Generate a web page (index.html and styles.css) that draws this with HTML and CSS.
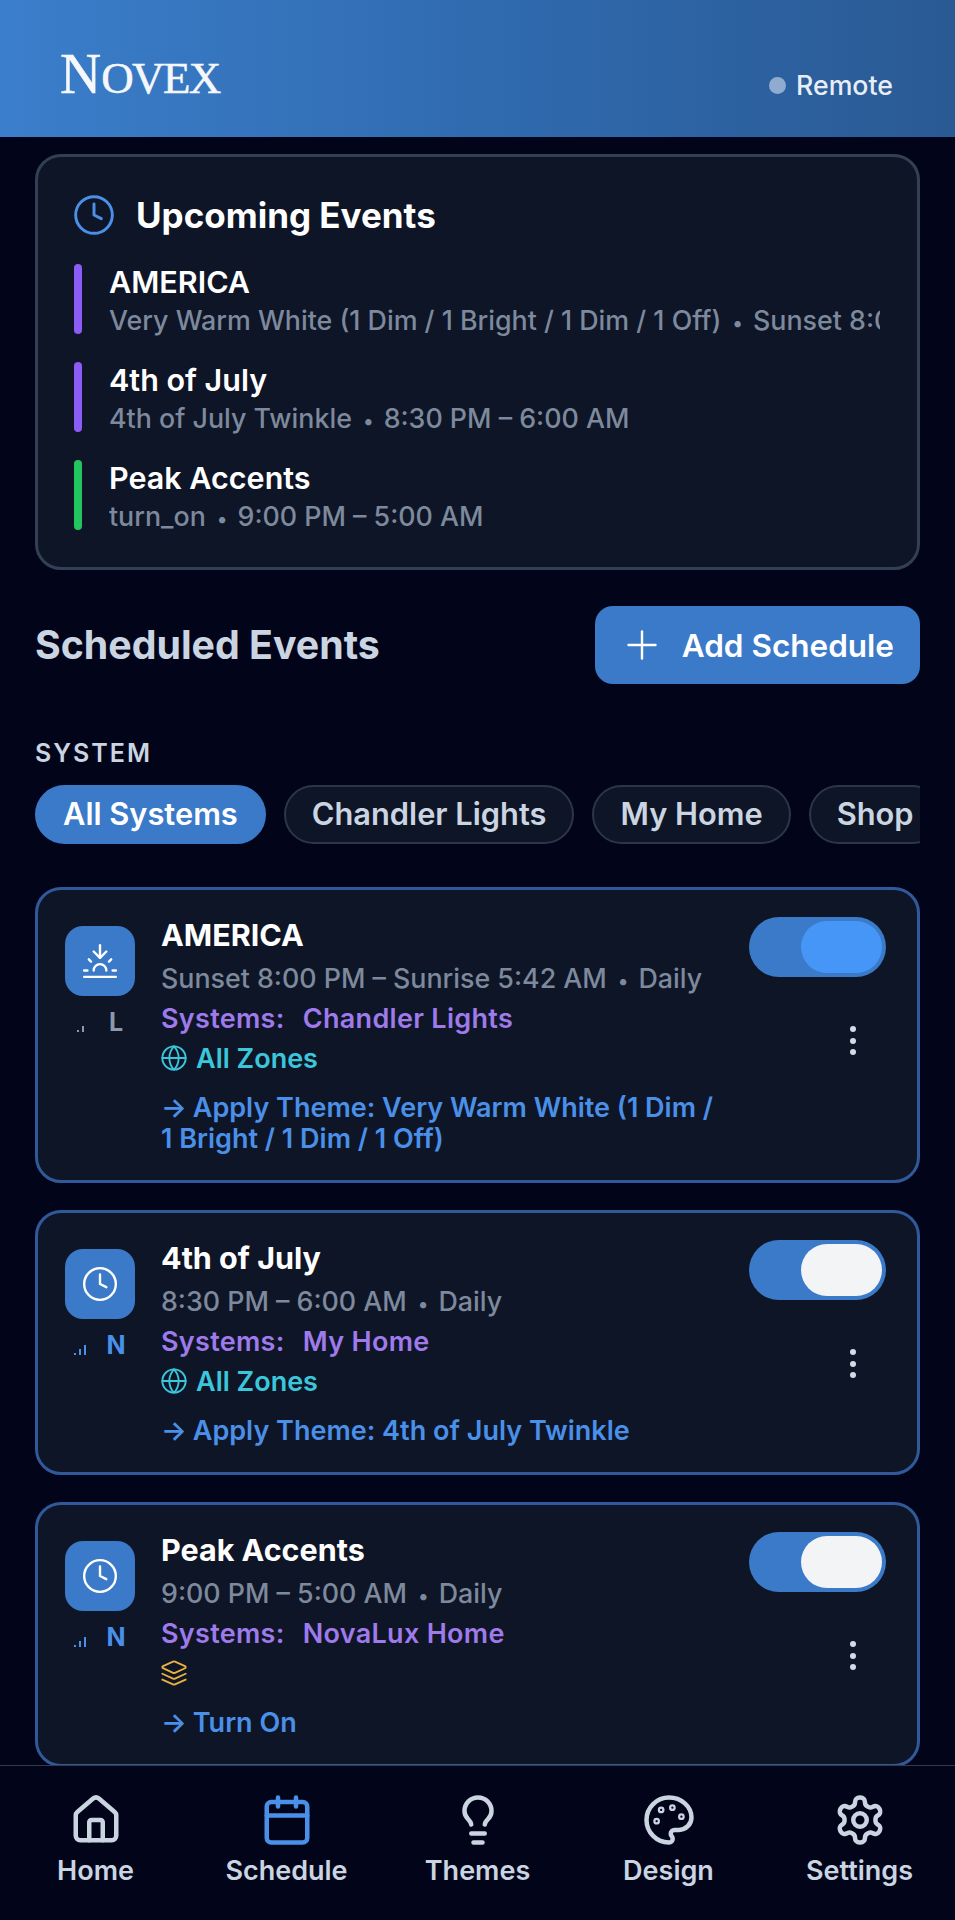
FILE: index.html
```html
<!DOCTYPE html>
<html lang="en">
<head>
  <meta charset="UTF-8" />
  <meta name="viewport" content="width=device-width, initial-scale=1.0"/>
  <title>Novex | Schedule</title>
  <link rel="stylesheet" href="styles.css">
</head>
<body>
  <svg class="sprites" xmlns="http://www.w3.org/2000/svg">
    <symbol id="i-clock" viewBox="0 0 24 24"><circle cx="12" cy="12" r="10"/><path d="M12 6v6l4 2"/></symbol>
    <symbol id="i-sunset" viewBox="0 0 24 24"><path d="M12 10V2"/><path d="m4.93 10.93 1.41 1.41"/><path d="M2 18h2"/><path d="M20 18h2"/><path d="m19.07 10.93-1.41 1.41"/><path d="M22 22H2"/><path d="m16 6-4 4-4-4"/><path d="M16 18a4 4 0 0 0-8 0"/></symbol>
    <symbol id="i-globe" viewBox="0 0 24 24"><circle cx="12" cy="12" r="10"/><path d="M12 2a14.5 14.5 0 0 0 0 20 14.5 14.5 0 0 0 0-20"/><path d="M2 12h20"/></symbol>
    <symbol id="i-layers" viewBox="0 0 24 24"><path d="m12.83 2.18a2 2 0 0 0-1.66 0L2.6 6.08a1 1 0 0 0 0 1.83l8.58 3.91a2 2 0 0 0 1.66 0l8.58-3.9a1 1 0 0 0 0-1.83Z"/><path d="m22 17.65-9.17 4.16a2 2 0 0 1-1.66 0L2 17.65"/><path d="m22 12.65-9.17 4.16a2 2 0 0 1-1.66 0L2 12.65"/></symbol>
  </svg>

  <header class="topbar">
    <div class="logo">N<span class="logo-small">OVEX</span></div>
    <div class="status"><span class="status-dot"></span>Remote</div>
  </header>

  <main class="content">
    <!-- Upcoming -->
    <section class="upcoming">
      <h2 class="upcoming-title">
        <svg class="icon upcoming-clock"><use href="#i-clock"/></svg>
        Upcoming Events
      </h2>
      <div class="upcoming-row">
        <span class="bar bar-purple"></span>
        <div class="upcoming-text">
          <div class="upcoming-name">AMERICA</div>
          <div class="upcoming-sub">Very Warm White (1 Dim / 1 Bright / 1 Dim / 1 Off)<span class="sep">•</span>Sunset 8:00 PM – Sunrise 5:42 AM</div>
        </div>
      </div>
      <div class="upcoming-row">
        <span class="bar bar-purple"></span>
        <div class="upcoming-text">
          <div class="upcoming-name">4th of July</div>
          <div class="upcoming-sub">4th of July Twinkle<span class="sep">•</span>8:30 PM – 6:00 AM</div>
        </div>
      </div>
      <div class="upcoming-row">
        <span class="bar bar-green"></span>
        <div class="upcoming-text">
          <div class="upcoming-name">Peak Accents</div>
          <div class="upcoming-sub">turn_on<span class="sep">•</span>9:00 PM – 5:00 AM</div>
        </div>
      </div>
    </section>

    <div class="section-head">
      <h2 class="section-title">Scheduled Events</h2>
      <button class="add-btn">
        <svg class="icon add-icon" viewBox="0 0 24 24"><path d="M2.5 12h19"/><path d="M12 2.5v19"/></svg>
        Add Schedule
      </button>
    </div>

    <div class="filter-label">SYSTEM</div>
    <div class="chips">
      <span class="chip chip-active">All Systems</span>
      <span class="chip">Chandler Lights</span>
      <span class="chip">My Home</span>
      <span class="chip">Shop</span>
    </div>

    <!-- Events -->
    <article class="event">
      <div class="event-side">
        <div class="event-icon"><svg class="icon"><use href="#i-sunset"/></svg></div>
        <div class="event-signal signal-off">
          <svg class="signal" viewBox="0 0 14 12"><rect x="0" y="10" width="2" height="2"/><rect x="5" y="6" width="2" height="6"/></svg>
          <span>L</span>
        </div>
      </div>
      <div class="event-body">
        <div class="event-name">AMERICA</div>
        <div class="event-meta">Sunset 8:00 PM – Sunrise 5:42 AM<span class="sep">•</span>Daily</div>
        <div class="event-systems">Systems: <span class="system-name">Chandler Lights</span></div>
        <div class="event-zones"><svg class="icon zone-icon"><use href="#i-globe"/></svg>All Zones</div>
        <div class="event-action"><span class="arrow">→</span>Apply Theme: Very Warm White (1 Dim / 1 Bright / 1 Dim / 1 Off)</div>
      </div>
      <div class="event-controls">
        <div class="toggle toggle-busy"><span class="toggle-thumb"></span></div>
        <div class="more"><span></span><span></span><span></span></div>
      </div>
    </article>

    <article class="event">
      <div class="event-side">
        <div class="event-icon"><svg class="icon"><use href="#i-clock"/></svg></div>
        <div class="event-signal">
          <svg class="signal" viewBox="0 0 14 12"><rect x="0" y="10" width="2" height="2"/><rect x="5" y="6" width="2" height="6"/><rect x="10" y="2" width="2" height="10"/></svg>
          <span>N</span>
        </div>
      </div>
      <div class="event-body">
        <div class="event-name">4th of July</div>
        <div class="event-meta">8:30 PM – 6:00 AM<span class="sep">•</span>Daily</div>
        <div class="event-systems">Systems: <span class="system-name">My Home</span></div>
        <div class="event-zones"><svg class="icon zone-icon"><use href="#i-globe"/></svg>All Zones</div>
        <div class="event-action"><span class="arrow">→</span>Apply Theme: 4th of July Twinkle</div>
      </div>
      <div class="event-controls">
        <div class="toggle"><span class="toggle-thumb"></span></div>
        <div class="more"><span></span><span></span><span></span></div>
      </div>
    </article>

    <article class="event">
      <div class="event-side">
        <div class="event-icon"><svg class="icon"><use href="#i-clock"/></svg></div>
        <div class="event-signal">
          <svg class="signal" viewBox="0 0 14 12"><rect x="0" y="10" width="2" height="2"/><rect x="5" y="6" width="2" height="6"/><rect x="10" y="2" width="2" height="10"/></svg>
          <span>N</span>
        </div>
      </div>
      <div class="event-body">
        <div class="event-name">Peak Accents</div>
        <div class="event-meta">9:00 PM – 5:00 AM<span class="sep">•</span>Daily</div>
        <div class="event-systems">Systems: <span class="system-name">NovaLux Home</span></div>
        <div class="event-zones"><svg class="icon zone-icon zone-amber"><use href="#i-layers"/></svg></div>
        <div class="event-action"><span class="arrow">→</span>Turn On</div>
      </div>
      <div class="event-controls">
        <div class="toggle"><span class="toggle-thumb"></span></div>
        <div class="more"><span></span><span></span><span></span></div>
      </div>
    </article>
  </main>

  <nav class="tabbar">
    <a class="tab">
      <svg class="icon tab-icon" viewBox="0 0 24 24"><path d="M15 21v-8a1 1 0 0 0-1-1h-4a1 1 0 0 0-1 1v8"/><path d="M3 10a2 2 0 0 1 .709-1.528l7-5.999a2 2 0 0 1 2.582 0l7 5.999A2 2 0 0 1 21 10v9a2 2 0 0 1-2 2H5a2 2 0 0 1-2-2z"/></svg>
      Home
    </a>
    <a class="tab tab-active">
      <svg class="icon tab-icon" viewBox="0 0 24 24"><path d="M8 2v4"/><path d="M16 2v4"/><rect x="3" y="4" width="18" height="18" rx="2"/><path d="M3 10h18"/></svg>
      Schedule
    </a>
    <a class="tab">
      <svg class="icon tab-icon" viewBox="0 0 24 24"><path d="M15 14c.2-1 .7-1.7 1.5-2.5 1-.9 1.5-2.2 1.5-3.5A6 6 0 0 0 6 8c0 1 .2 2.2 1.5 3.5.7.7 1.3 1.5 1.5 2.5"/><path d="M9 18h6"/><path d="M10 22h4"/></svg>
      Themes
    </a>
    <a class="tab">
      <svg class="icon tab-icon" viewBox="0 0 24 24"><circle cx="13.5" cy="6.5" r=".5"/><circle cx="17.5" cy="10.5" r=".5"/><circle cx="8.5" cy="7.5" r=".5"/><circle cx="6.5" cy="12.5" r=".5"/><path d="M12 2C6.5 2 2 6.5 2 12s4.5 10 10 10c.926 0 1.648-.746 1.648-1.688 0-.437-.18-.835-.437-1.125-.29-.289-.438-.652-.438-1.125a1.64 1.64 0 0 1 1.668-1.668h1.996c3.051 0 5.555-2.503 5.555-5.554C21.965 6.012 17.461 2 12 2z"/></svg>
      Design
    </a>
    <a class="tab">
      <svg class="icon tab-icon" viewBox="0 0 24 24"><path d="M12.22 2h-.44a2 2 0 0 0-2 2v.18a2 2 0 0 1-1 1.73l-.43.25a2 2 0 0 1-2 0l-.15-.08a2 2 0 0 0-2.73.73l-.22.38a2 2 0 0 0 .73 2.73l.15.1a2 2 0 0 1 1 1.72v.51a2 2 0 0 1-1 1.74l-.15.09a2 2 0 0 0-.73 2.73l.22.38a2 2 0 0 0 2.73.73l.15-.08a2 2 0 0 1 2 0l.43.25a2 2 0 0 1 1 1.73V20a2 2 0 0 0 2 2h.44a2 2 0 0 0 2-2v-.18a2 2 0 0 1 1-1.73l.43-.25a2 2 0 0 1 2 0l.15.08a2 2 0 0 0 2.73-.73l.22-.39a2 2 0 0 0-.73-2.73l-.15-.08a2 2 0 0 1-1-1.74v-.5a2 2 0 0 1 1-1.74l.15-.09a2 2 0 0 0 .73-2.73l-.22-.38a2 2 0 0 0-2.73-.73l-.15.08a2 2 0 0 1-2 0l-.43-.25a2 2 0 0 1-1-1.73V4a2 2 0 0 0-2-2z"/><circle cx="12" cy="12" r="3"/></svg>
      Settings
    </a>
  </nav>
</body>
</html>
```

FILE: styles.css
```css
* {
  box-sizing: border-box;
  margin: 0;
  padding: 0;
}
html, body {
  height: 100%;
}
body {
  display: flex;
  flex-direction: column;
  height: 1920px;
  overflow: hidden;
  background: #02051a;
  color: white;
  font-family: 'Inter', 'Liberation Sans', sans-serif;
}
.sprites {
  display: none;
}
.icon {
  fill: none;
  stroke: currentColor;
  stroke-width: 2;
  stroke-linecap: round;
  stroke-linejoin: round;
  flex: none;
}
.sep {
  display: inline-block;
  margin: 0 10px 0 11px;
  font-size: 0.75em;
  line-height: 1;
}

/* Header */
.topbar {
  flex: none;
  height: 137px;
  padding: 0 62px 0 60px;
  display: flex;
  justify-content: space-between;
  background: linear-gradient(90deg, #3b7ecb 0%, #2f69ad 55%, #2a5a94 100%);
}
.logo {
  margin-top: 44px;
  font-family: 'Liberation Serif', serif;
  font-size: 57px;
  line-height: 60px;
  height: 60px;
  color: #f5f7fa;
  -webkit-text-stroke: 0.5px #f5f7fa;
}
.logo-small {
  font-size: 45px;
  letter-spacing: -1.6px;
}
.status {
  margin-top: 69px;
  height: 32px;
  display: flex;
  align-items: center;
  gap: 10px;
  font-size: 26.7px;
  font-weight: 500;
  color: #e8eef6;
}
.status-dot {
  width: 17px;
  height: 17px;
  border-radius: 50%;
  background: #8fabd0;
}

/* Main column */
.content {
  flex: 1;
  min-height: 0;
  overflow: hidden;
  padding: 17px 35px 0;
}
.upcoming {
  height: 416px;
  padding: 36px 37px 0 36px;
  background: #0e1526;
  border: 3px solid #333f54;
  border-radius: 26px;
}
.upcoming-title {
  display: flex;
  align-items: center;
  gap: 20px;
  height: 44px;
  margin-bottom: 27px;
  font-size: 35px;
  font-weight: 700;
}
.upcoming-clock {
  width: 44px;
  height: 44px;
  margin-left: -2px;
  stroke-width: 1.6;
  color: #4a90e8;
}
.upcoming-row {
  display: flex;
  gap: 27px;
  height: 70px;
  margin-bottom: 28px;
}
.bar {
  flex: none;
  width: 8px;
  height: 70px;
  border-radius: 4px;
}
.bar-purple {
  background: #8b5cf6;
}
.bar-green {
  background: #22c55e;
}
.upcoming-text {
  min-width: 0;
  flex: 1;
}
.upcoming-name {
  font-size: 30.5px;
  font-weight: 600;
  line-height: 36px;
}
.upcoming-sub {
  margin-top: 3px;
  font-size: 26.8px;
  font-weight: 500;
  line-height: 34px;
  color: #7d899c;
  white-space: nowrap;
  overflow: hidden;
}

/* Section head */
.section-head {
  display: flex;
  align-items: center;
  justify-content: space-between;
  margin-top: 36px;
}
.section-title {
  margin-top: -2px;
  font-size: 39.3px;
  font-weight: 700;
  color: #cbd5e1;
}
.add-btn {
  display: flex;
  align-items: center;
  gap: 23px;
  height: 78px;
  padding: 0 26px 0 30px;
  border: none;
  border-radius: 18px;
  background: #3b7ac9;
  color: white;
  font-family: inherit;
  font-size: 31.5px;
  font-weight: 600;
}
.add-icon {
  width: 34px;
  height: 34px;
  stroke-width: 1.7;
}
.filter-label {
  margin-top: 54px;
  font-size: 25px;
  line-height: 30px;
  font-weight: 600;
  letter-spacing: 2px;
  color: #cbd5e1;
}
.chips {
  display: flex;
  gap: 18px;
  margin-top: 17px;
  overflow: hidden;
}
.chip {
  flex: none;
  height: 59px;
  padding: 0 26px 2px;
  display: flex;
  align-items: center;
  border: 2px solid #2c3648;
  border-radius: 30px;
  background: #0e1526;
  color: #cbd5e1;
  font-size: 30.8px;
  font-weight: 600;
}
.chip-active {
  border-color: #3b7ac9;
  background: #3b7ac9;
  color: white;
}

/* Event cards */
.event {
  display: flex;
  margin-top: 27px;
  padding: 27px 31px 26px 27px;
  background: #0e1526;
  border: 3px solid #31599a;
  border-radius: 26px;
}
.chips + .event {
  margin-top: 43px;
}
.event-side {
  flex: none;
  width: 70px;
  margin-top: 9px;
  margin-right: 26px;
}
.event-icon {
  width: 70px;
  height: 70px;
  border-radius: 18px;
  background: #3b7ac9;
  display: flex;
  align-items: center;
  justify-content: center;
  color: white;
}
.event-icon .icon {
  width: 38px;
  height: 38px;
  stroke-width: 1.5;
}
.event-signal {
  display: flex;
  align-items: center;
  justify-content: center;
  gap: 18px;
  margin-top: 12px;
  font-size: 25px;
  line-height: 28px;
  font-weight: 700;
  color: #4a90e8;
}
.signal-off {
  color: #8c98ad;
}
.signal {
  width: 14px;
  height: 12px;
  margin-top: 7px;
  fill: currentColor;
}
.event-body {
  flex: 1;
  min-width: 0;
}
.event-name {
  font-size: 30.5px;
  font-weight: 700;
  line-height: 36px;
}
.event-meta {
  margin-top: 8px;
  font-size: 26.8px;
  font-weight: 500;
  line-height: 34px;
  color: #7d899c;
}
.event-systems {
  margin-top: 7px;
  font-size: 27px;
  line-height: 34px;
  font-weight: 600;
  letter-spacing: 0.3px;
  color: #9f7aea;
}
.system-name {
  margin-left: 11px;
}
.event-zones {
  display: flex;
  align-items: center;
  gap: 8px;
  height: 34px;
  margin-top: 5px;
  padding-left: 1px;
  font-size: 27px;
  font-weight: 600;
  color: #3cc6dc;
}
.zone-icon {
  width: 28px;
  height: 28px;
  margin-left: -2px;
  stroke-width: 1.6;
}
.zone-amber {
  color: #eab040;
}
.event-action {
  margin-top: 17px;
  font-size: 27px;
  line-height: 31px;
  font-weight: 600;
  color: #4a90e8;
}
.arrow {
  margin-right: 6px;
}
.event-controls {
  flex: none;
  width: 137px;
  margin-left: 20px;
}
.toggle {
  display: flex;
  justify-content: flex-end;
  align-items: center;
  width: 137px;
  height: 60px;
  padding-right: 4px;
  border-radius: 30px;
  background: #3b7ac9;
}
.toggle-thumb {
  width: 81px;
  height: 52px;
  border-radius: 26px;
  background: #f3f4f6;
}
.toggle-busy .toggle-thumb {
  background: #4696f8;
}
.more {
  display: flex;
  flex-direction: column;
  align-items: center;
  gap: 5.5px;
  width: 34px;
  margin: 49px 16px 0 auto;
}
.more span {
  width: 6px;
  height: 6px;
  border-radius: 50%;
  background: #d5dbe6;
}

/* Bottom nav */
.tabbar {
  flex: none;
  height: 155px;
  display: grid;
  grid-template-columns: repeat(5, 1fr);
  padding-top: 27px;
  border-top: 1px solid #333a4a;
  background: #02051a;
}
.tab {
  display: flex;
  flex-direction: column;
  align-items: center;
  gap: 8px;
  color: #cbd5e1;
  font-size: 27px;
  font-weight: 600;
  line-height: 32px;
}
.tab-icon {
  width: 54px;
  height: 54px;
}
.tab-active .tab-icon {
  color: #4a90e8;
}
```
